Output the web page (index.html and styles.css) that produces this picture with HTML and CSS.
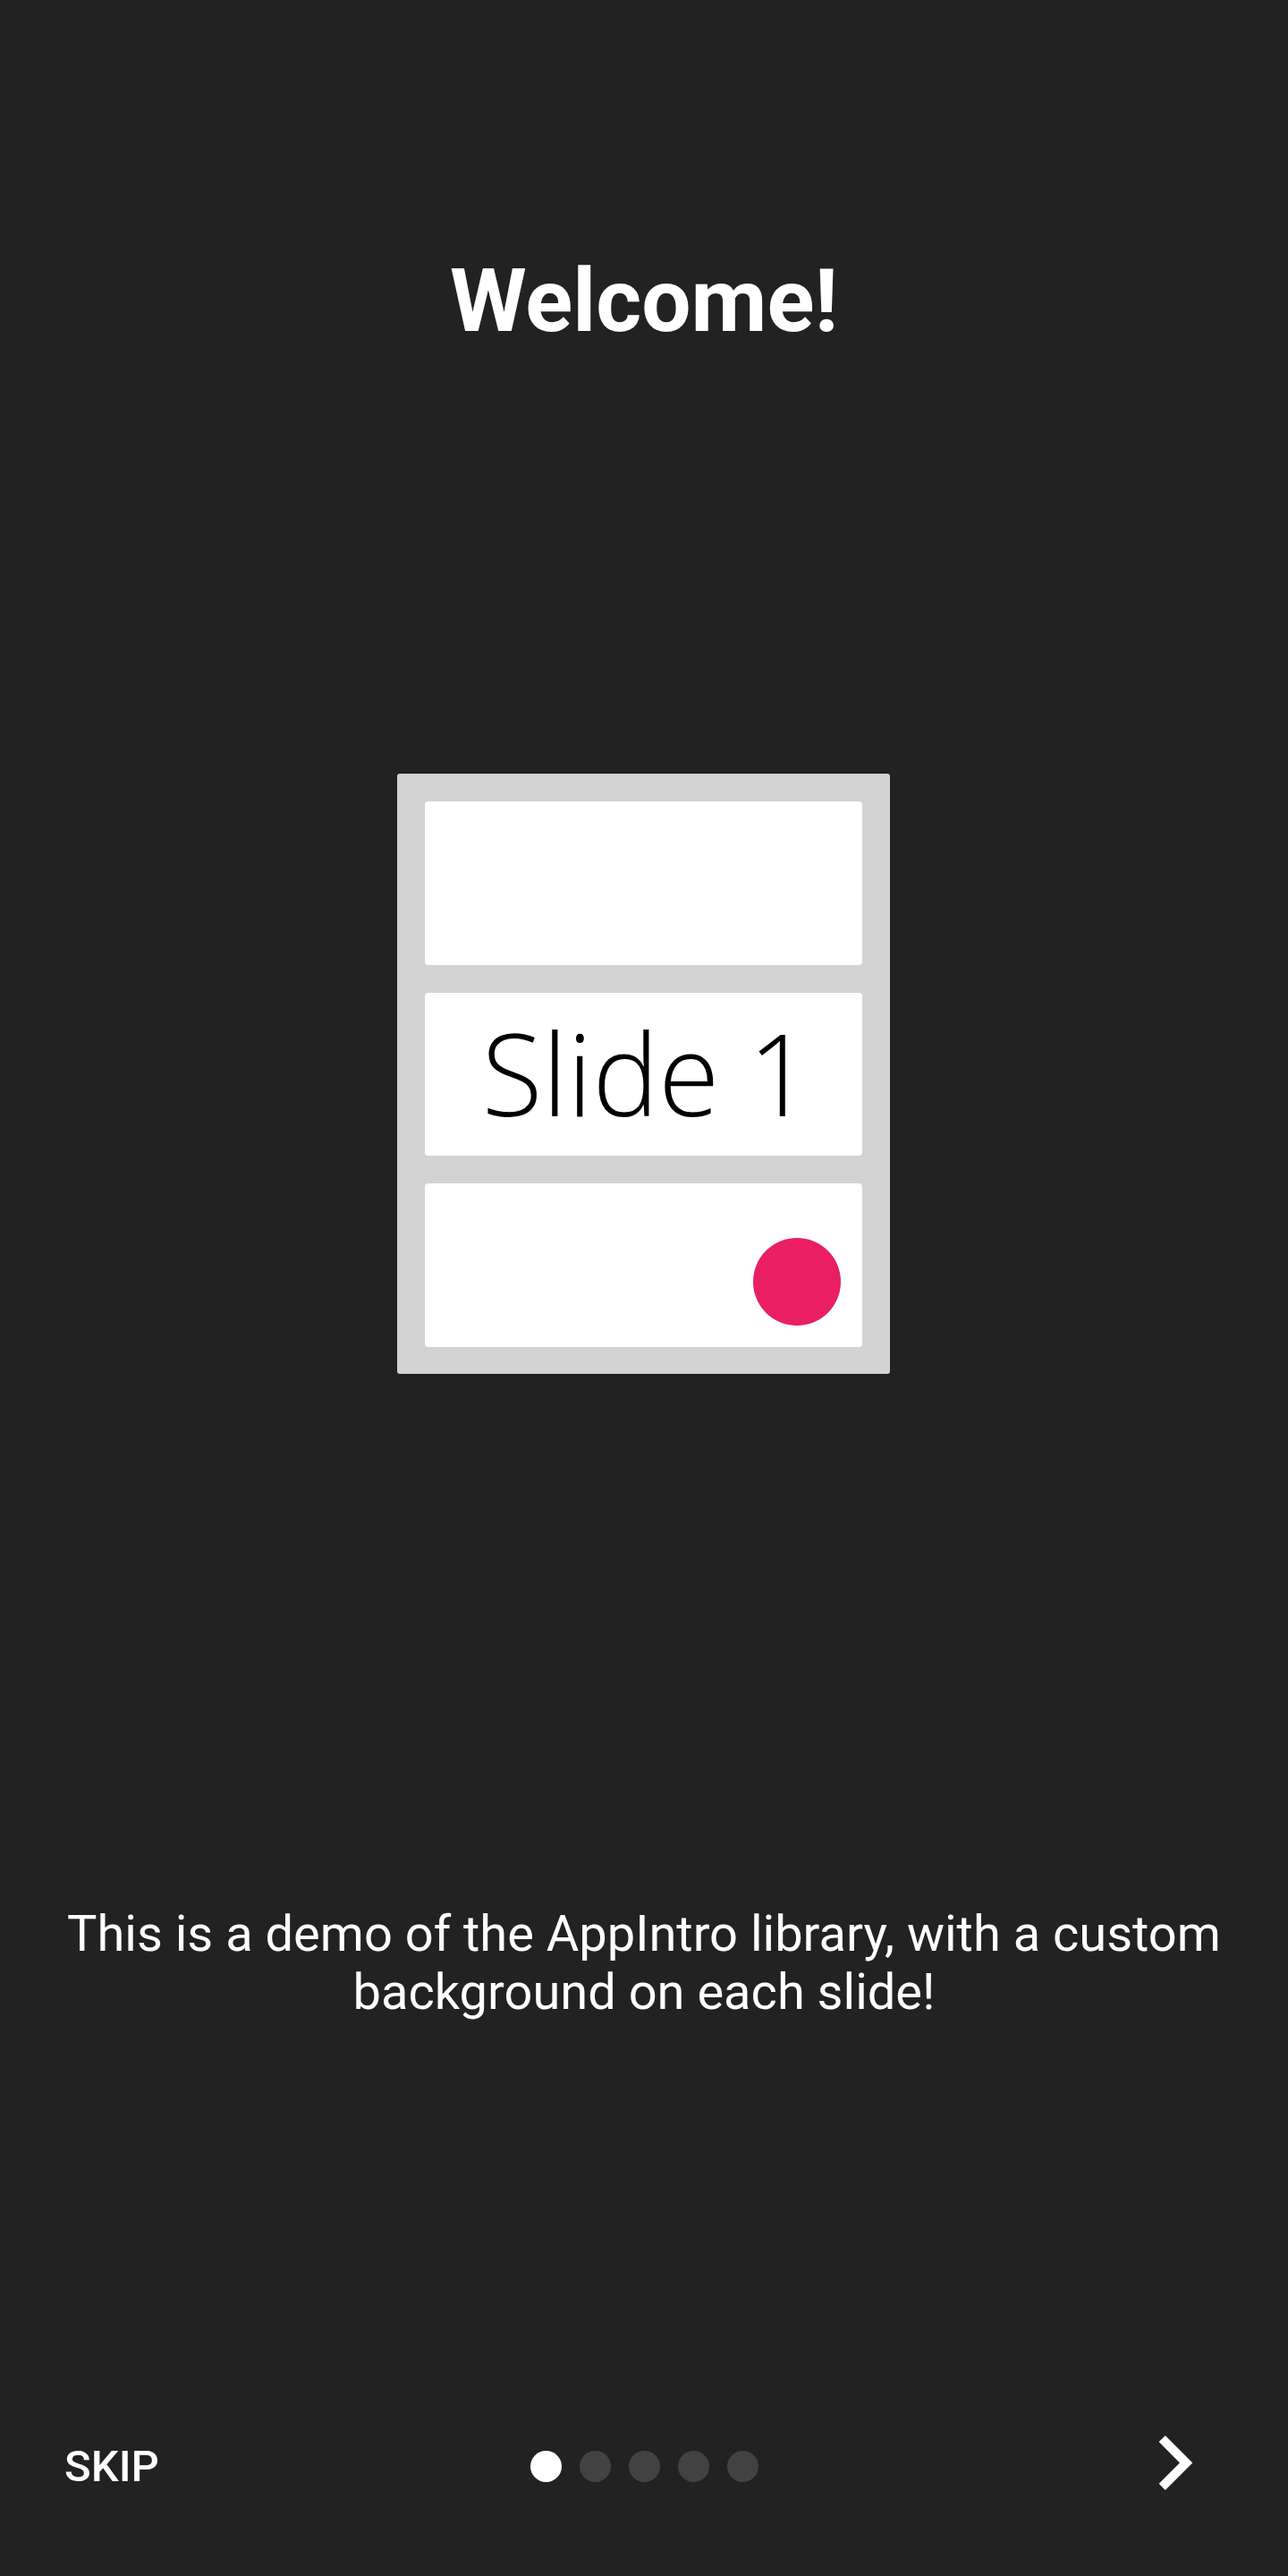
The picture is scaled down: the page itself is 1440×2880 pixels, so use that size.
FILE: index.html
```html
<!DOCTYPE html>
<html lang="en">
<head>
<meta charset="utf-8">
<title>AppIntro</title>
<link rel="stylesheet" href="styles.css">
</head>
<body>
<main class="screen">
  <h1 class="title">Welcome!</h1>
  <div class="card">
    <div class="card-box"></div>
    <div class="card-box card-label-row"><span class="card-label">Slide 1</span></div>
    <div class="card-box card-fab-row"><span class="fab"></span></div>
  </div>
  <p class="description">This is a demo of the AppIntro library, with a custom background on each slide!</p>
  <nav class="bottom-bar">
    <button class="skip">SKIP</button>
    <div class="dots">
      <span class="dot dot-active"></span>
      <span class="dot"></span>
      <span class="dot"></span>
      <span class="dot"></span>
      <span class="dot"></span>
    </div>
    <button class="next" aria-label="Next">
      <svg class="next-icon" viewBox="0 0.7 24 24" width="122" height="122"><path d="M10 6L8.59 7.41 13.17 12l-4.58 4.59L10 18l6-6z" fill="#ffffff"/></svg>
    </button>
  </nav>
</main>
</body>
</html>
```

FILE: styles.css
```css
html, body {
  margin: 0;
  padding: 0;
  background: #222222;
}
body {
  font-family: Roboto, "Liberation Sans", sans-serif;
  color: #ffffff;
}
.screen {
  width: 1440px;
  height: 2880px;
  display: flex;
  flex-direction: column;
  align-items: center;
}
.title {
  margin: 279px 0 0;
  font-size: 98px;
  line-height: 115px;
  font-weight: 700;
  text-align: center;
}
.card {
  margin-top: 471px;
  margin-left: -1px;
  width: 551px;
  height: 671px;
  box-sizing: border-box;
  padding: 31px 31px 30px 31px;
  background: #d3d3d3;
  border-radius: 3px;
  display: grid;
  grid-template-rows: 183px 182px 183px;
  row-gap: 31px;
}
.card-box {
  background: #ffffff;
  border-radius: 4px;
  display: flex;
  align-items: center;
  justify-content: center;
  min-height: 0;
}
.card-label-row {
  padding-left: 7px;
}
.card-label {
  display: inline-block;
  font-family: "Open Sans", "Noto Sans", sans-serif;
  font-weight: 300;
  font-size: 124px;
  line-height: 1;
  color: #000000;
  white-space: nowrap;
  transform: translateY(-2.5px) scaleY(1.03);
}
.card-fab-row {
  justify-content: flex-end;
  align-items: flex-end;
  padding: 0 24px 24px 0;
}
.fab {
  width: 98px;
  height: 98px;
  border-radius: 50%;
  background: #e91e63;
}
.description {
  margin: 594px 0 0;
  padding: 0 64px;
  font-size: 56px;
  line-height: 65px;
  text-align: center;
}
.bottom-bar {
  margin-top: auto;
  margin-bottom: 62px;
  width: 100%;
  height: 122px;
  box-sizing: border-box;
  padding: 0 72px;
  display: grid;
  grid-template-columns: 1fr auto 1fr;
  align-items: center;
}
.skip {
  justify-self: start;
  background: none;
  border: 0;
  padding: 0;
  color: #ffffff;
  font-family: Roboto, "Liberation Sans", sans-serif;
  font-weight: 500;
  font-size: 49px;
  line-height: 57px;
}
.dots {
  display: flex;
  gap: 20px;
}
.dot {
  width: 35px;
  height: 35px;
  border-radius: 50%;
  background: #424242;
}
.dot-active {
  background: #ffffff;
}
.next {
  justify-self: end;
  margin-right: -6px;
  background: none;
  border: 0;
  padding: 0;
  width: 122px;
  height: 122px;
  display: flex;
}
.next-icon {
  display: block;
}
```
